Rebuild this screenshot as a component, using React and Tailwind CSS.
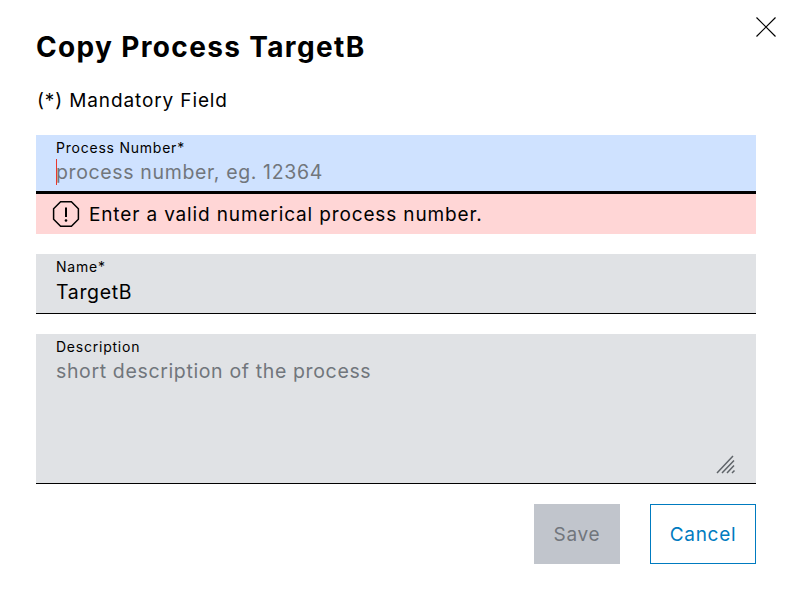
export default function App() {
  return (
    <div className="relative h-[601px] w-[793px] overflow-hidden bg-white pl-9 pr-[37px] pt-[27px] font-['Inter',sans-serif] text-black">
      <button className="absolute left-[756px] top-[17px] h-5 w-5" aria-label="Close">
        <svg viewBox="0 0 20 20" className="h-5 w-5" fill="none" stroke="#000" strokeWidth="1.2"><path d="M0.5 0.5 19.5 19.5M19.5 0.5 0.5 19.5" /></svg>
      </button>
      <h1 className="h-10 text-[28px] font-bold leading-10 tracking-[1.35px]">Copy Process TargetB</h1>
      <p className="mt-[21px] h-[25px] pl-px text-[19px] leading-[26px] tracking-[0.88px]">(*) Mandatory Field</p>

      <div className="mt-[22px]">
        <div className="relative h-[59px] border-b-[3px] border-black bg-[#cfe2ff] px-5">
          <div className="pt-[3px] text-[14px] leading-[19px] tracking-[0.77px]">Process Number*</div>
          <div className="mt-[1px] text-[19.5px] leading-[28px] tracking-[0.64px] text-[#71767c]">process number, eg. 12364</div>
          <span className="absolute left-5 top-[24px] h-[26px] w-px bg-[#e8382f]" />
        </div>
        <div className="flex h-10 items-center gap-[9px] bg-[#ffd6d6] pl-4 text-[19px] tracking-[0.86px]">
          <svg viewBox="0 0 28 28" className="h-7 w-7" fill="none" stroke="#000" strokeWidth="1.5">
            <path d="M8.6 1.7h10.8l7 7v10.6l-7 7H8.6l-7-7V8.7z" />
            <path d="M14 7.500v9.500" strokeWidth="2" />
            <circle cx="14" cy="20.500" r="1.300" fill="#000" stroke="none" />
          </svg>
          <span className="pt-[2px]">Enter a valid numerical process number.</span>
        </div>
      </div>

      <div className="mt-5 h-[60px] border-b border-black bg-[#e0e2e5] px-5">
        <div className="pt-[3px] text-[14px] leading-[19px] tracking-[0.77px]">Name*</div>
        <div className="mt-[2px] text-[19.5px] leading-[28px] tracking-[0.64px]">TargetB</div>
      </div>

      <div className="relative mt-5 h-[150px] border-b border-black bg-[#e0e2e5] px-5">
        <div className="pt-[3px] text-[14px] leading-[19px] tracking-[0.77px]">Description</div>
        <div className="pt-px text-[19.5px] leading-[28px] tracking-[0.64px] text-[#71767c]">short description of the process</div>
        <svg viewBox="0 0 20 20" className="absolute bottom-[8px] right-[20px] h-5 w-5" fill="none" stroke="#5f6469" strokeWidth="1.5">
          <path d="M1 18 17 1M6 18 18 5.500M11 18 18 10.500M16 18 18.500 15.500" />
        </svg>
      </div>

      <div className="mt-5 flex justify-end gap-[30px]">
        <button className="h-[60px] w-[86px] bg-[#c1c5cc] pt-[2px] text-[19px] tracking-[0.7px] text-[#71767c]">Save</button>
        <button className="h-[60px] w-[106px] border border-[#007bc0] bg-white pt-[2px] text-[19px] tracking-[0.7px] text-[#007bc0]">Cancel</button>
      </div>
    </div>
  );
}
